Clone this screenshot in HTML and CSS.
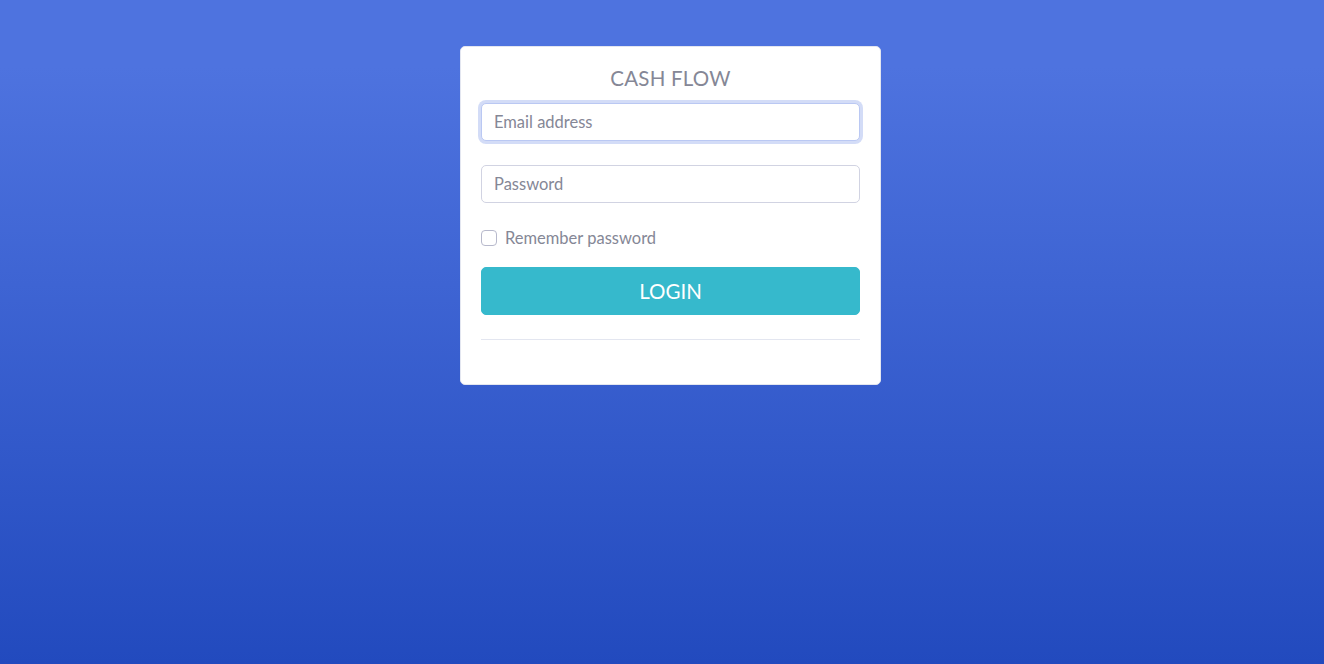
FILE: index.html
```html
<!DOCTYPE html>
<html lang="en">
<head>
<meta charset="utf-8">
<title>Cash Flow - Login</title>
<link rel="stylesheet" href="styles.css">
</head>
<body>
<main class="page">
  <div class="card">
    <h1 class="title">CASH FLOW</h1>
    <form class="form">
      <input class="field field-focus" type="email" placeholder="Email address">
      <input class="field" type="password" placeholder="Password">
      <label class="check">
        <span class="check-box"></span>
        <span class="check-label">Remember password</span>
      </label>
      <button class="btn" type="button">LOGIN</button>
    </form>
    <hr class="divider">
  </div>
</main>
</body>
</html>
```

FILE: styles.css
```css
* { box-sizing: border-box; }
html, body { margin: 0; height: 100%; }
body {
  background-color: #4e73df;
  background-image: linear-gradient(180deg, #4e73df 10%, #224abe 100%);
  font-family: Lato, "Noto Sans", sans-serif;
  color: #858796;
}
.page {
  display: flex;
  justify-content: center;
  padding-top: 46px;
  padding-left: 17px;
  min-height: 100%;
}
.card {
  width: 421px;
  height: 339px;
  background: #fff;
  border: 1px solid #e3e6f0;
  border-radius: 5px;
  padding: 19px 20px 20px;
}
.title {
  margin: 0 0 13px;
  font-size: 20.5px;
  font-weight: 400;
  line-height: 24px;
  text-align: center;
  color: #858796;
  letter-spacing: 0.2px;
}
.form { display: flex; flex-direction: column; }
.field {
  display: block;
  width: 100%;
  height: 38px;
  padding: 6px 12px;
  font: inherit;
  font-size: 16.5px;
  color: #6e707e;
  border: 1px solid #d1d3e2;
  border-radius: 5px;
  background: #fff;
  outline: none;
  margin-bottom: 24px;
}
.field::placeholder { color: #858796; }
.field-focus {
  border-color: #bac8f3;
  box-shadow: 0 0 0 3px rgba(78, 115, 223, 0.25);
}
.check {
  display: flex;
  align-items: center;
  height: 24px;
  margin-bottom: 16px;
  font-size: 16.5px;
  margin-top: -1px;
}
.check-box {
  width: 16px;
  height: 16px;
  border: 1px solid #b7b9cc;
  border-radius: 4px;
  margin-right: 8px;
  background: #fff;
}
.btn {
  height: 48px;
  border: 1px solid #36b9cc;
  background: #36b9cc;
  color: #fff;
  font: inherit;
  font-size: 20.5px;
  border-radius: 5px;
  cursor: pointer;
  margin-top: 1px;
}
.divider {
  margin: 24px 0 0;
  border: 0;
  border-top: 1px solid #e3e6f0;
}
```
